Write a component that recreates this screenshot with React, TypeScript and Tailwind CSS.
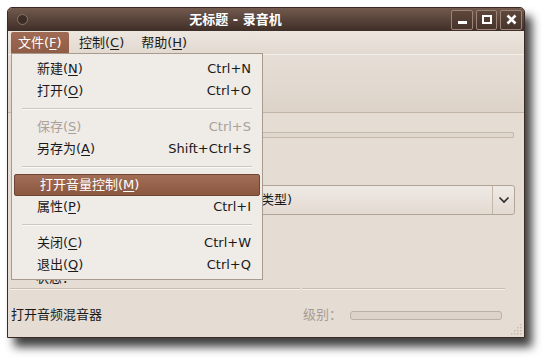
import React from "react";

const font = { fontFamily: '"DejaVu Sans", "Noto Sans CJK SC", sans-serif' };

function U({ c }: { c: string }) {
  return <span className="underline underline-offset-[2px] decoration-1">{c}</span>;
}

function Item({ label, m, sc, disabled, active }: { label: string; m: string; sc?: string; disabled?: boolean; active?: boolean }) {
  return (
    <div
      className={
        "flex items-center justify-between h-[22px] pl-[25px] pr-[11px] " +
        (active
          ? "mx-[2px] pl-[20px] rounded-[2px] border border-[#6f4636] bg-gradient-to-b from-[#a36e56] to-[#8c5741] text-white"
          : disabled
          ? "text-[#aaa199]"
          : "text-[#1a1a1a]")
      }
    >
      <span>
        {label}(<U c={m} />)
      </span>
      {sc && <span>{sc}</span>}
    </div>
  );
}

function Sep() {
  return <div className="mx-[10px] my-[6px] h-[2px] border-t border-[#cfc6bc] border-b border-b-[#fbf9f7]" />;
}

export default function App() {
  return (
    <div className="w-[548px] h-[360px] bg-white overflow-hidden pt-[7px] pl-[7px] text-[13px]" style={font}>
      <div className="relative w-[518px] h-[331px] rounded-t-[5px] bg-[#e5ddd4] border border-[#3b2a22] shadow-[7px_9px_10px_rgba(0,0,0,0.75)] flex flex-col">
        {/* title bar */}
        <div className="h-[23px] rounded-t-[4px] bg-gradient-to-b from-[#735a4e] to-[#3f2e27] flex items-center pl-[9px] pr-[2px]">
          <div className="w-[11px] h-[11px] rounded-full bg-[#3d2d26] border border-[#8a7668]" />
          <div className="flex-1 flex items-center justify-center text-white font-bold text-[13px] pr-[8px]">
            无标题 - 录音机
          </div>
          <div className="flex gap-[3px]">
            {[0, 1, 2].map((i) => (
              <div key={i} className={"h-[20px] rounded-[2px] border border-[#9b8477] bg-gradient-to-b from-[#5e463b] to-[#46342c] flex items-center justify-center " + (i === 1 ? "w-[21px]" : "w-[22px]")}>
                {i === 0 && <div className="w-[9px] h-[3px] bg-white mt-[6px]" />}
                {i === 1 && <div className="w-[10px] h-[9px] border-2 border-white" />}
                {i === 2 && (
                  <svg width="11" height="11" viewBox="0 0 11 11">
                    <path d="M1.5 1.5 L9.5 9.5 M9.5 1.5 L1.5 9.5" stroke="white" strokeWidth="2.6" />
                  </svg>
                )}
              </div>
            ))}
          </div>
        </div>
        {/* menu bar */}
        <div className="h-[23px] flex items-stretch bg-gradient-to-b from-[#ece6e0] to-[#e2d9cf] text-[#1a1a1a]">
          <div className="ml-[3px] w-[58px] mt-[1px] rounded-t-[2px] bg-gradient-to-b from-[#a06b54] to-[#8e5b45] text-white flex items-center pl-[7px]">
            文件(<U c="F" />)
          </div>
          <div className="ml-[10px] flex items-center">
            控制(<U c="C" />)
          </div>
          <div className="ml-[17px] flex items-center">
            帮助(<U c="H" />)
          </div>
        </div>
        {/* toolbar */}
        <div className="h-[59px] border-t border-[#f2eee9] border-b border-b-[#c2b5a8] bg-gradient-to-b from-[#e6ded6] to-[#ddd3c9]" />
        {/* content */}
        <div className="flex-1 flex flex-col px-[3px]">
          <div className="mt-[19px] ml-[10px] mr-[7px] h-[6px] border border-[#c6b9ac] bg-[#e0d7ce] rounded-[1px]" />
          <div className="mt-[47px] ml-[10px] mr-[6px] h-[30px] rounded-[3px] border border-[#b2a597] bg-gradient-to-b from-[#efeae5] to-[#e3dad1] flex items-center">
            <div className="flex-1 pl-[8px] text-[#1a1a1a] flex justify-end pr-[200px]">（类型)</div>
            <div className="w-[22px] h-full border-l border-[#c3b7ab] flex items-center justify-center">
              <svg width="12" height="8" viewBox="0 0 12 8">
                <path d="M1.5 1.5 L6 6 L10.5 1.5" stroke="#2a2a2a" strokeWidth="1.6" fill="none" />
              </svg>
            </div>
          </div>
          <div className="mt-[53px] ml-[25px] text-[#1a1a1a] h-[21px]">状态：</div>
          <div className="mt-[-1px] flex ml-[-1px]">
            <div className="w-[290px] h-[2px] border-t border-[#c9bdb1] border-b border-b-[#f4f0ec]" />
            <div className="ml-[2px] w-[203px] h-[2px] border-t border-[#c9bdb1] border-b border-b-[#f4f0ec]" />
          </div>
        </div>
        {/* status bar */}
        <div className="h-[44px] flex items-center pl-[3px] relative">
          <div className="text-[#1a1a1a]">打开音频混音器</div>
          <div className="ml-[201px] text-[#a59c92]">级别：</div>
          <div className="ml-[8px] w-[152px] h-[9px] rounded-[3px] border border-[#bcb0a4] bg-[#ddd3ca]" />
          <svg className="absolute right-[1px] bottom-[2px]" width="12" height="12" viewBox="0 0 12 12">
            {[[10, 2], [10, 5], [7, 5], [10, 8], [7, 8], [4, 8], [10, 11], [7, 11], [4, 11], [1, 11]].map(([x, y], i) => (
              <rect key={i} x={x - 1} y={y - 1} width="1.5" height="1.5" fill="#c7bbb0" />
            ))}
          </svg>
        </div>
        {/* dropdown menu */}
        <div className="absolute left-[3px] top-[45px] w-[252px] h-[227px] bg-[#efebe7] border border-[#a89a8c] pt-[4px] text-[13px]">
          <Item label="新建" m="N" sc="Ctrl+N" />
          <Item label="打开" m="O" sc="Ctrl+O" />
          <Sep />
          <Item label="保存" m="S" sc="Ctrl+S" disabled />
          <Item label="另存为" m="A" sc="Shift+Ctrl+S" />
          <Sep />
          <Item label="打开音量控制" m="M" active />
          <Item label="属性" m="P" sc="Ctrl+I" />
          <Sep />
          <Item label="关闭" m="C" sc="Ctrl+W" />
          <Item label="退出" m="Q" sc="Ctrl+Q" />
        </div>
      </div>
    </div>
  );
}
